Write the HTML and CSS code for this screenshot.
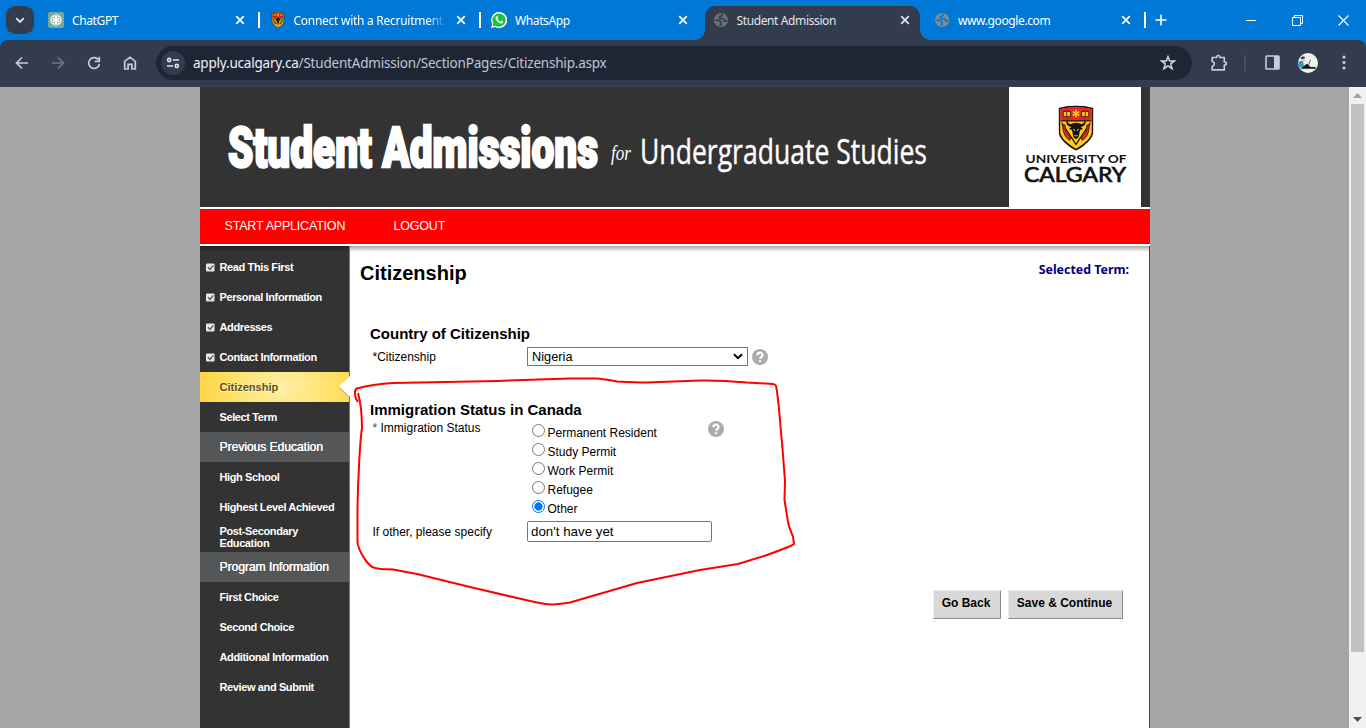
FILE: index.html
```html
<!DOCTYPE html>
<html lang="en">
<head>
<meta charset="utf-8">
<title>Student Admission</title>
<link rel="stylesheet" href="styles.css">
</head>
<body>
<svg class="defs" width="0" height="0">
  <defs>
    <symbol id="x" viewBox="0 0 10 10"><path d="M1.2 1.2 8.8 8.8M8.8 1.2 1.2 8.8" fill="none" stroke="currentColor" stroke-width="1.7"/></symbol>
    <symbol id="globe" viewBox="0 0 16 16"><circle cx="8" cy="8" r="7" fill="currentColor"/><path d="M2.3 8.2 6 8.4 8.2 10.2 8 12.5 6.6 13.4M8.8 1.8 9 3.6 6.8 4.6 6.6 6.4 10.2 7 12 9 14 8.6" fill="none" stroke="var(--cut)" stroke-width="1.7"/></symbol>
    <symbol id="shield" viewBox="0 0 34 44">
      <path d="M.8 3C6 1.6 10 .8 17 .8S28 1.6 33.200 3V26C33 32 25 39 17 43.200 9 39 1 32 .8 26Z" fill="#fc1" stroke="#1c1413" stroke-width="1.6"/>
      <path d="M1.600 3.600C9 1 25 1 32.400 3.600V15H1.600Z" fill="#e5252b"/>
      <path d="M2 15H32M3 17 17 38 31 17" fill="none" stroke="#1c1413" stroke-width="1.200"/>
      <path d="M4.500 6 8 5.500 11.500 6V11H4.500ZM22.500 6 26 5.500 29.500 6V11H22.500Z" fill="#fc1" stroke="#1c1413" stroke-width=".8"/>
      <path d="M8 5.500V11M26 5.500V11" stroke="#1c1413" stroke-width=".8"/>
      <path d="M17 4V11.500M13.800 6 20.200 9.800M20.200 6 13.800 9.800" stroke="#fc1" stroke-width="1.500"/>
      <path d="M4 19C4 27 7 32 11 34L12 31C8 28 6 24 6.500 19ZM30 19C30 27 27 32 23 34L22 31C26 28 28 24 27.500 19Z" fill="#e5252b" stroke="#1c1413" stroke-width=".8"/>
      <path d="M8.500 13C8 17 11 19 13 17.500 15 16.500 19 16.500 21 17.500 23 19 26 17 25.500 13 28 18 25 20.500 21.500 21L24 23 21 24 19.500 31 17 33 14.500 31 13 24 10 23 12.500 21C9 20.500 6 18 8.500 13Z" fill="#1c1413"/>
      <path d="M14.500 23 16 24.500M19.500 23 18 24.500M15.500 29.500H18.500" stroke="#fc1"/>
    </symbol>
    <symbol id="help" viewBox="0 0 16 16"><circle cx="8" cy="8" r="8" fill="#acacac"/><path d="M5.300 6.200C5.400 2.700 10.600 2.800 10.600 6 10.600 7.900 8.300 7.900 8.100 9.800M8.100 11.200V13" fill="none" stroke="#fff" stroke-width="2.100"/></symbol>
    <symbol id="check" viewBox="0 0 9 9"><rect y=".5" width="8.500" height="8" rx="1" fill="#e8e8e8"/><path d="M2 4.300 4 6.500 7.300 2.300" fill="none" stroke="#555" stroke-width="1.300"/></symbol>
  </defs>
</svg>

<header class="tabstrip">
  <button class="tabsearch"><svg width="10" height="7" viewBox="0 0 10 7"><path d="M1.200 1.200 5 5 8.800 1.200" fill="none" stroke="#e6ebf5" stroke-width="1.800"/></svg></button>
  <div class="tab">
    <svg class="fav" viewBox="0 0 16 16"><rect width="16" height="16" rx="2" fill="#74aa9c"/><g fill="none" stroke="#fff" stroke-width=".9"><ellipse cx="8" cy="5.600" rx="2.900" ry="3"/><ellipse cx="8" cy="5.600" rx="2.900" ry="3" transform="rotate(60 8 8)"/><ellipse cx="8" cy="5.600" rx="2.900" ry="3" transform="rotate(120 8 8)"/><ellipse cx="8" cy="5.600" rx="2.900" ry="3" transform="rotate(180 8 8)"/><ellipse cx="8" cy="5.600" rx="2.900" ry="3" transform="rotate(240 8 8)"/><ellipse cx="8" cy="5.600" rx="2.900" ry="3" transform="rotate(300 8 8)"/></g></svg>
    <span class="title">ChatGPT</span><svg class="close"><use href="#x"/></svg><i class="sep"></i>
  </div>
  <div class="tab">
    <svg class="fav"><use href="#shield"/></svg>
    <span class="title fade">Connect with a Recruitment A</span><svg class="close"><use href="#x"/></svg><i class="sep"></i>
  </div>
  <div class="tab">
    <svg class="fav" viewBox="0 0 16 16"><path d="M0 16 1.200 11.800A8 8 0 1 1 4.200 14.900Z" fill="#fff"/><path d="M1.500 14.500 2.400 11.500A6.600 6.600 0 1 1 4.600 13.700Z" fill="#1dbf3f"/><path d="M5.300 4.200C4.200 5 4.300 6.500 5.300 7.900 6.700 10 8.500 11.500 10.400 11.500 11.600 11.300 12.200 10.600 12 9.500L10.200 8.600 9.200 9.700C8 9.200 7 8.300 6.500 7.100L7.200 6.100 6.500 4.200Z" fill="#fff"/></svg>
    <span class="title">WhatsApp</span><svg class="close"><use href="#x"/></svg>
  </div>
  <div class="tab active">
    <svg class="fav"><use href="#globe"/></svg>
    <span class="title">Student Admission</span><svg class="close"><use href="#x"/></svg>
  </div>
  <div class="tab">
    <svg class="fav grey"><use href="#globe"/></svg>
    <span class="title">www.google.com</span><svg class="close"><use href="#x"/></svg><i class="sep"></i>
  </div>
  <svg class="newtab" width="12" height="12" viewBox="0 0 12 12"><path d="M6 .5V11.500M.5 6H11.500" stroke="#fff" stroke-width="1.600"/></svg>
  <div class="wincontrols">
    <svg width="11" height="11"><path d="M0 5.500H10" stroke="#fff"/></svg>
    <svg width="11" height="11" fill="none" stroke="#fff"><path d="M.5 2.500H8.500V10.500H.5ZM2.500 2.500V.5H10.500V8.500H8.500"/></svg>
    <svg width="11" height="11"><path d="M.5 .5 10.500 10.500M10.500 .5 .5 10.500" stroke="#fff" stroke-width="1.100"/></svg>
  </div>
</header>

<div class="toolbar">
  <div class="navbtns">
    <svg viewBox="0 0 16 16"><path d="M14 8H3M8 2.500 2.500 8 8 13.500" /></svg>
    <svg viewBox="0 0 16 16" class="dim"><path d="M2 8H13M8 2.500 13.500 8 8 13.500"/></svg>
    <svg viewBox="0 0 16 16"><path d="M12.300 4.600A5.400 5.400 0 1 0 13.400 9M13.300 1.700V6.300H8.700"/></svg>
    <svg viewBox="0 0 16 16"><path d="M2.700 14V6.300L8 2.200 13.300 6.300V14H9.900V9.300H6.100V14Z"/></svg>
  </div>
  <div class="omnibox">
    <span class="site"><svg width="14" height="12" viewBox="0 0 14 12" fill="none" stroke="#dfe3ec" stroke-width="1.600"><circle cx="3.200" cy="3" r="1.600"/><path d="M7 3H13M1 9H7"/><circle cx="10.800" cy="9" r="1.600"/></svg></span>
    <span class="url"><b>apply.ucalgary.ca</b>/StudentAdmission/SectionPages/Citizenship.aspx</span>
    <svg class="star" width="16" height="16" viewBox="0 0 16 16"><path d="M8 1.700 9.700 6H14.400L10.700 8.900 12.100 13.700 8 10.900 3.900 13.700 5.300 8.900 1.600 6H6.300Z" fill="none" stroke="#d3d8e4" stroke-width="1.500"/></svg>
  </div>
  <svg class="ext" width="18" height="18" viewBox="0 0 18 18"><path d="M2.200 3.500H6.600C6.600 .8 10 .8 10 3.500H14.300V8C17 8 17 11 14.300 11V15.800H2.200V12.500C5 11.600 5 8 2.200 7.200Z" fill="none" stroke="#c3cde2" stroke-width="1.700" stroke-linejoin="round"/></svg>
  <i class="tsep"></i>
  <svg class="panel" width="15" height="15" viewBox="0 0 15 15"><rect x="1" y="1" width="13" height="13" rx=".8" fill="none" stroke="#c3cde2" stroke-width="1.600"/><path d="M9 1H14V14H9Z" fill="#c3cde2"/></svg>
  <svg class="avatar" width="20" height="20" viewBox="0 0 20 20"><circle cx="10" cy="10" r="10" fill="#f0f0f0"/><path d="M.8 8.500 5 7.500 6 13 1.500 15Q-.5 12 .8 8.500Z" fill="#2d96dd"/><circle cx="5.200" cy="6.200" r="2.200" fill="#edc4ae"/><path d="M2.500 5.500Q4 2.500 7.500 4.200L4.500 6Z" fill="#222"/><path d="M3 15 9 10.800 12.500 14H17.500V15.800H3Z" fill="#151515"/><path d="M10.500 12 12.500 6.800" stroke="#666"/></svg>
  <svg class="more" width="4" height="15" viewBox="0 0 4 15" fill="#c3cde2"><circle cx="2" cy="2" r="1.600"/><circle cx="2" cy="7.500" r="1.600"/><circle cx="2" cy="13" r="1.600"/></svg>
</div>

<div class="viewport">
  <div class="page">
    <div class="banner">
      <svg class="wordmark" width="809" height="120" viewBox="0 0 809 120" fill="#fff">
        <text class="wm-main" x="28" y="80" textLength="370" lengthAdjust="spacingAndGlyphs">Student Admissions</text>
        <text class="wm-for" x="411" y="73" textLength="20" lengthAdjust="spacingAndGlyphs">for</text>
        <text class="wm-sub" x="440" y="77" textLength="287" lengthAdjust="spacingAndGlyphs">Undergraduate Studies</text>
      </svg>
      <div class="logo">
        <svg width="132" height="120" viewBox="0 0 132 120" fill="#111">
          <use href="#shield" x="49.500" y="18.500" width="35" height="45"/>
          <text class="lg-a" x="16.500" y="76.300" textLength="101" lengthAdjust="spacingAndGlyphs">UNIVERSITY OF</text>
          <text class="lg-b" x="15" y="95" textLength="102" lengthAdjust="spacingAndGlyphs">CALGARY</text>
        </svg>
      </div>
    </div>
    <nav class="redbar"><a class="start">START APPLICATION</a><a>LOGOUT</a></nav>
    <div class="body">
      <ul class="side">
        <li><svg><use href="#check"/></svg>Read This First</li>
        <li><svg><use href="#check"/></svg>Personal Information</li>
        <li><svg><use href="#check"/></svg>Addresses</li>
        <li><svg><use href="#check"/></svg>Contact Information</li>
        <li class="current">Citizenship<svg class="notch" viewBox="0 0 12 22"><path d="M12 2 1 12 12 22Z" fill="#777" opacity=".5"/><path d="M12 0 1 10.500 12 21Z" fill="#fff"/></svg></li>
        <li>Select Term</li>
        <li class="head">Previous Education</li>
        <li>High School</li>
        <li>Highest Level Achieved</li>
        <li>Post-Secondary<br>Education</li>
        <li class="head">Program Information</li>
        <li>First Choice</li>
        <li>Second Choice</li>
        <li>Additional Information</li>
        <li>Review and Submit</li>
      </ul>
      <main class="main">
        <div class="titlebar"><h1>Citizenship</h1><span class="term">Selected Term:</span></div>
        <h2>Country of Citizenship</h2>
        <div class="row country">
          <label>*Citizenship</label>
          <div class="select">Nigeria<svg width="10" height="7" viewBox="0 0 10 7"><path d="M1 1.300 5 5.200 9 1.300" fill="none" stroke="#000" stroke-width="2"/></svg></div>
          <svg class="q"><use href="#help"/></svg>
        </div>
        <h2 class="second">Immigration Status in Canada</h2>
        <div class="row status">
          <label><span class="req">*</span> Immigration Status</label>
          <div class="radios">
            <div><i></i>Permanent Resident</div>
            <div><i></i>Study Permit</div>
            <div><i></i>Work Permit</div>
            <div><i></i>Refugee</div>
            <div><i class="on"></i>Other</div>
          </div>
          <svg class="q"><use href="#help"/></svg>
        </div>
        <div class="row other"><label>If other, please specify</label><div class="input">don't have yet</div></div>
        <div class="actions"><button>Go Back</button><button class="save">Save &amp; Continue</button></div>
      </main>
    </div>
  </div>
  <div class="scroll">
    <svg width="9" height="5"><path d="M0 5 4.500 0 9 5Z" fill="#a3a3a3"/></svg>
    <i></i>
    <svg width="9" height="5"><path d="M0 0 4.500 5 9 0Z" fill="#505050"/></svg>
  </div>
</div>

<svg class="ink" width="1366" height="728" viewBox="0 0 1366 728"><path d="M358 393C361 404 362 415 362 428 360 440 358 480 357.500 508V542C358 550 368 567 375 568 382 570 388 569 393 569.500L417 574 470 587 517 598C535 602 545 605 553 604.500 560 604 566 603 570 602.500L637 583 700 570 738 564 767 555C778 551 792 546 794 544L793 537C791 531 789 528 788 522L784.500 500 785 481 782 442C780 425 779 400 776 386 775 384 774 384 773 384L747 382.500C730 381 718 380 700 380.500L647 382.500C637 382.500 627 382 617 381.500 608 380 603 379 597 378.500H570L497 381 393 383C375 384 366 386 357 388.500 354 390 354 397 358 402" fill="none" stroke="#f00" stroke-width="2" stroke-linejoin="round"/></svg>
</body>
</html>
```
FILE: styles.css
```css
* { box-sizing: border-box; }
body { margin: 0; width: 1366px; height: 728px; overflow: hidden; display: flex; flex-direction: column; font-family: "Liberation Sans", Arial, sans-serif; background: #a6a6a6; position: relative; }
.defs { position: absolute; }
svg { display: block; flex: none; }
button { font-family: inherit; }

/* Browser chrome */
.tabstrip { height: 40px; flex: none; background: #0078d7; display: flex; padding-left: 6px; font-family: "Noto Sans", "Open Sans", sans-serif; font-size: 12px; color: #fff; --cut: #0078d7; z-index: 1; }
.tabsearch { width: 28px; height: 28px; margin: 6px 4px 0 0; border: 0; border-radius: 9px; background: #323c4d; padding: 0; display: flex; align-items: center; justify-content: center; }
.tab { width: 221.500px; position: relative; display: flex; align-items: center; padding-left: 10px; }
.tab .fav { width: 16px; height: 16px; }
.tab .title { margin-left: 8px; padding-top: 2px; width: 148px; overflow: hidden; white-space: nowrap; line-height: 18px; letter-spacing: -.38px; }
.tab .fade { -webkit-mask-image: linear-gradient(90deg, #000 134px, transparent 152px); mask-image: linear-gradient(90deg, #000 134px, transparent 152px); width: 155px; margin-right: -7px; letter-spacing: -.27px; }
.tab .close { width: 10px; height: 10px; margin-left: 15px; }
.tab .sep { width: 2px; height: 16px; background: #fff; margin-left: 13px; }
.tab.active { --cut: #323c4d; color: #e0e5ee; z-index: 0; }
.tab.active .fav { color: #6d6f74; }
.tab .grey { color: #8b8986; }
.tab.active::before { content: ""; position: absolute; z-index: -1; left: 2px; right: 4px; top: 6px; bottom: 0; background: #323c4d; border-radius: 10px 10px 0 0; }
.tab.active::after { content: ""; position: absolute; z-index: -1; left: -8px; right: -6px; bottom: 0; height: 10px; background: radial-gradient(circle at 0 0, transparent 9.500px, #323c4d 10px) left / 10px 10px no-repeat, radial-gradient(circle at 100% 0, transparent 9.500px, #323c4d 10px) right / 10px 10px no-repeat; }
.newtab { margin: 14px 0 0 9.500px; }
.wincontrols { display: flex; gap: 35px; margin: 15px 17px 0 auto; }
.toolbar { height: 47px; flex: none; background: #323c4d; border-bottom: 1px solid #3b4148; border-radius: 8px 8px 0 0; display: flex; align-items: center; padding: 0 20px 1px 14px; position: relative; }
.toolbar::before { content: ""; position: absolute; inset: 0 0 auto; height: 8px; z-index: -1; background: #0078d7; }
.navbtns { display: flex; gap: 20px; margin-right: 18px; }
.navbtns svg { width: 16px; height: 16px; fill: none; stroke: #c3cde2; stroke-width: 1.700; }
.navbtns .dim { stroke: #6c7688; }
.omnibox { width: 1036px; height: 34px; border-radius: 17px; background: #1e2636; display: flex; align-items: center; padding: 0 16px 0 5px; }
.site { width: 24px; height: 24px; border-radius: 50%; background: #323c4d; display: flex; align-items: center; justify-content: center; }
.url { margin-left: 8px; padding-top: 1px; font-family: "Noto Sans", "Open Sans", sans-serif; font-size: 13.500px; letter-spacing: -.2px; color: #c0c5cf; white-space: nowrap; }
.url b { font-weight: 400; color: #eef1f7; }
.star { margin-left: auto; }
.ext { margin-left: 18px; }
.tsep { width: 2px; height: 16px; background: #465061; margin: 0 18px 0 16px; }
.avatar { margin-left: 18px; }
.panel { margin-left: 1px; }
.more { margin-left: auto; }

/* Page */
.viewport { flex: 1; display: flex; justify-content: space-between; padding-left: 200px; background: #a6a6a6; min-height: 0; }
.page { width: 950px; background: #fff; display: flex; flex-direction: column; }
.banner { height: 120px; background: #333; display: flex; justify-content: space-between; padding-right: 9px; }
.logo { width: 132px; background: #fff; }
.wm-main { font: 900 55px Roboto, sans-serif; stroke: #fff; stroke-width: 2.400px; }
.wm-for { font: italic 22px "Liberation Serif", serif; }
.wm-sub { font: 400 35px "Open Sans", sans-serif; stroke: #fff; stroke-width: .4px; }
.lg-a { font: 700 11.500px Lato, sans-serif; }
.lg-b { font: 400 21px Lato, sans-serif; stroke: #111; stroke-width: .7px; }
.redbar { height: 35px; margin: 2px 0; background: #f00; color: #fff; font-size: 12.500px; letter-spacing: -.2px; display: flex; align-items: center; padding: 0 0 2px 24.500px; }
.redbar .start { width: 169px; }
.body { flex: 1; display: flex; min-height: 0; }
.side { width: 150px; margin: 0; padding: 6px 0 0; list-style: none; background: linear-gradient(#222, transparent 6px), #333; color: #fff; font-size: 11px; font-weight: 700; line-height: 12px; border-right: 1px solid #777; }
.side li { height: 30px; display: flex; align-items: center; padding-left: 19.500px; position: relative; white-space: nowrap; letter-spacing: -.38px; }
.side li > svg:not(.notch) { width: 9px; height: 9px; margin: 0 5px 0 -14px; }
.side .head { background: #555658; font-size: 12px; font-weight: 400; letter-spacing: 0; text-shadow: .3px 0 #fff; }
.side .current { background: radial-gradient(ellipse 85px 55px at 55% 50%, #fff0a8, #ffd641); color: #5d512e; text-shadow: 0 1px #fff3bd; letter-spacing: 0; }
.notch { position: absolute; right: -1px; top: 4px; width: 12px; height: 22px; }
.main { flex: 1; background: linear-gradient(#a9a9a9, #fff 6px); border-right: 1px solid #444; color: #000; padding: 0 20px; position: relative; }
.titlebar { display: flex; justify-content: space-between; height: 79px; padding-top: 15px; margin-left: -10px; }
h1 { margin: 0; font-size: 20px; line-height: 24px; }
.term { font: 700 12.400px/17px "Noto Sans", sans-serif; color: #000080; }
h2 { margin: 0; font-size: 15px; line-height: 17px; }
.row { display: flex; font-size: 12px; }
.row label { width: 154.500px; margin-left: 2.500px; line-height: 14px; }
.country { padding-top: 1px; }
.country label { margin-top: 7px; }
.select { width: 221px; height: 19px; margin-top: 4px; border: 1px solid #767676; font-size: 12.800px; line-height: 17px; display: flex; justify-content: space-between; align-items: center; padding: 0 4px; }
.q { width: 16px; height: 16px; margin: 6px 0 0 4px; }
.second { margin-top: 35px; }
.status { height: 100px; }
.status label { margin-top: 3px; }
.req { color: #1d4f91; }
.radios { width: 177px; padding: 6px 0 0 5px; }
.radios div { height: 19px; display: flex; line-height: 19px; }
.radios i { width: 13px; height: 13px; border: 1px solid #767676; border-radius: 50%; margin: 0 2.500px 0 0; }
.radios .on { border-color: #0075ff; background: radial-gradient(circle, #0075ff 3.800px, #fff 4.400px); }
.status .q { margin: 3px 0 0 4px; }
.other { margin-top: 3px; }
.other label { margin-top: 4px; }
.input { width: 185px; height: 21px; border: 1px solid #767676; border-radius: 2px; font-size: 13.333px; line-height: 19px; padding-left: 3px; }
.actions { display: flex; justify-content: flex-end; gap: 7px; margin: 48px 6px 0 0; }
.actions button { width: 68px; height: 29px; background: #d8d8d8; border: 1px solid; border-color: #eee #8b8b8b #8b8b8b #eee; font-size: 12px; font-weight: 700; padding: 0 2px 4px 0; white-space: nowrap; color: #000; }
.actions .save { width: 115px; }
.scroll { width: 17px; background: #f1f1f1; display: flex; flex-direction: column; align-items: center; padding: 6px 0; }
.scroll i { width: 13px; height: 548px; margin-top: 6px; background: #c1c1c1; }
.scroll svg:last-child { margin-top: auto; }
.ink { position: absolute; left: 0; top: 0; pointer-events: none; z-index: 5; }
```
